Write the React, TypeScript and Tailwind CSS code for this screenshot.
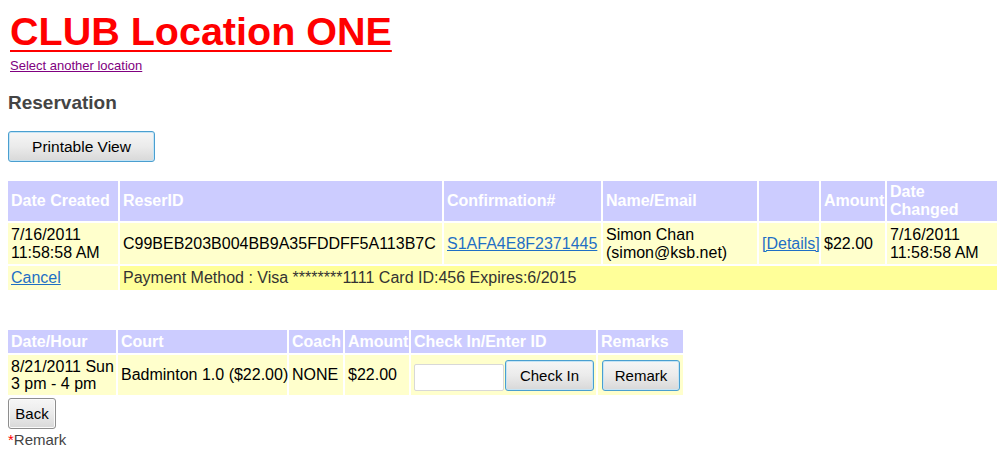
import React from "react";

const font = { fontFamily: '"Liberation Sans", Arial, sans-serif' };

function Btn({ children, className = "", blue = true }: { children: React.ReactNode; className?: string; blue?: boolean }) {
  return (
    <button
      className={
        "rounded-[3px] border bg-gradient-to-b from-[#f6f6f6] via-[#ebebeb] to-[#d8d8d8] text-black leading-none " +
        (blue ? "border-[#4a9fd0] shadow-[inset_0_0_0_1px_#c5e4f5] " : "border-[#8e8e8e] shadow-[inset_0_0_0_1px_#fbfbfb] ") +
        className
      }
    >
      {children}
    </button>
  );
}

export default function App() {
  const th = "bg-[#ccccff] text-white font-bold text-left align-middle pl-[3px] pr-[1px] leading-[18px]";
  const td = "bg-[#ffffcc] text-black text-left align-middle pl-[3px] pr-[1px] leading-[18px]";
  const th2 = "bg-[#ccccff] text-white font-bold text-left align-middle pl-[3px] pr-0 leading-[17px] whitespace-nowrap";
  const td2 = "bg-[#ffffcc] text-black text-left align-middle pl-[3px] pr-0 leading-[17.5px] whitespace-nowrap";
  return (
    <div className="w-[1000px] h-[454px] bg-white px-2 overflow-hidden" style={font}>
      <div className="pt-[12px] pl-[2px] text-[39.5px] leading-[39px] h-[51px]">
        <a href="#" className="font-bold text-[#ff0000] underline decoration-[1.5px] underline-offset-[5px]">
          CLUB Location ONE
        </a>
      </div>
      <div className="mt-[7px] pl-[2px] text-[13px] leading-[15px] h-[15px]">
        <a href="#" className="text-[#800080] underline underline-offset-[1px]">
          Select another location
        </a>
      </div>
      <h2 className="mt-[19px] text-[19px] leading-[22px] font-bold text-[#444444]">Reservation</h2>
      <div className="mt-[17px] flex">
        <Btn className="w-[147px] h-[31px] text-[15.5px]">Printable View</Btn>
      </div>

      <table className="mt-[17px] -ml-[2px] w-[993px] table-fixed border-separate border-spacing-[2px] text-[16px]">
        <tbody>
          <tr className="h-[40px]">
            <td className={th + " w-[110px]"}>Date Created</td>
            <td className={th + " w-[322px]"}>ReserID</td>
            <td className={th + " w-[157px]"}>Confirmation#</td>
            <td className={th + " w-[154px]"}>Name/Email</td>
            <td className={th + " w-[60px]"}></td>
            <td className={th + " w-[64px] pl-[2px]"}>Amount</td>
            <td className={th + " w-[110px]"}>Date Changed</td>
          </tr>
          <tr className="h-[41px]">
            <td className={td}>
              7/16/2011
              <br />
              11:58:58 AM
            </td>
            <td className={td}>C99BEB203B004BB9A35FDDFF5A113B7C</td>
            <td className={td}>
              <a href="#" className="text-[#1f6fc5] underline">
                S1AFA4E8F2371445
              </a>
            </td>
            <td className={td}>
              Simon Chan
              <br />
              (simon@ksb.net)
            </td>
            <td className={td}>
              <a href="#" className="text-[#1f6fc5] underline">
                [Details]
              </a>
            </td>
            <td className={td}>$22.00</td>
            <td className={td}>
              7/16/2011
              <br />
              11:58:58 AM
            </td>
          </tr>
          <tr className="h-[24px]">
            <td className={td}>
              <a href="#" className="text-[#1f6fc5] underline">
                Cancel
              </a>
            </td>
            <td colSpan={6} className="bg-[#ffff99] text-[#333333] align-middle pl-[3px] leading-[18px]">
              Payment Method : Visa ********1111 Card ID:456 Expires:6/2015
            </td>
          </tr>
        </tbody>
      </table>

      <table className="mt-[36px] -ml-[2px] w-[679px] table-fixed border-separate border-spacing-[2px] text-[16px]">
        <tbody>
          <tr className="h-[23px]">
            <td className={th2 + " w-[108px]"}>Date/Hour</td>
            <td className={th2 + " w-[169px]"}>Court</td>
            <td className={th2 + " w-[54px] pl-[2px]"}>Coach</td>
            <td className={th2 + " w-[64px] pl-[2px]"}>Amount</td>
            <td className={th2 + " w-[185px] pl-[2px]"}>Check In/Enter ID</td>
            <td className={th2 + " w-[85px] pl-[2px]"}>Remarks</td>
          </tr>
          <tr className="h-[40px]">
            <td className={td2}>
              8/21/2011 Sun
              <br />
              3 pm - 4 pm
            </td>
            <td className={td2 + " pl-[2px]"}>Badminton 1.0 ($22.00)</td>
            <td className={td2 + " pl-[2px]"}>NONE</td>
            <td className={td2 + " pl-[2px]"}>$22.00</td>
            <td className={td2 + " pl-[2px]"}>
              <div className="flex items-end">
                <input
                  type="text"
                  className="w-[90px] h-[27px] bg-white border border-[#d8d8d8] rounded-[2px] outline-none"
                />
                <Btn className="ml-[1px] w-[89px] h-[31px] text-[15px]">Check In</Btn>
              </div>
            </td>
            <td className={td2 + " pl-[4px]"}>
              <Btn className="w-[78px] h-[31px] text-[15px]">Remark</Btn>
            </td>
          </tr>
        </tbody>
      </table>
      <div className="mt-[1px] flex">
        <Btn blue={false} className="w-[48px] h-[31px] text-[15px]">
          Back
        </Btn>
      </div>
      <div className="mt-[2px] text-[15px] leading-[17px] text-[#444444]">
        <span className="text-[#ff0000]">*</span>Remark
      </div>
    </div>
  );
}
